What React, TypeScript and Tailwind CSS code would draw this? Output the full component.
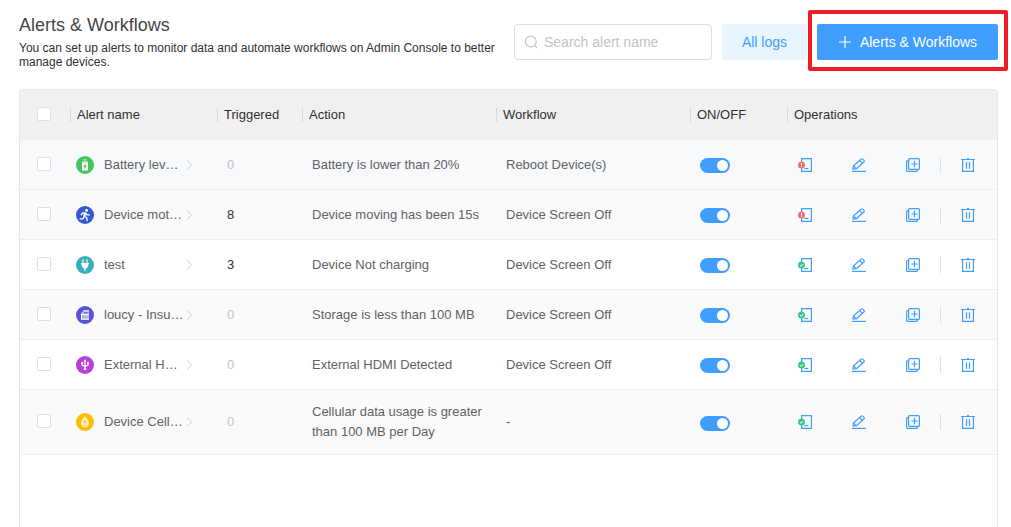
import React from "react";
import clsx from "clsx";

type AlertRow = {
  name: string;
  kind: "battery" | "motion" | "plug" | "storage" | "usb" | "data";
  triggered: number;
  action: string;
  workflow: string;
  failed?: boolean;
};

const alerts: AlertRow[] = [
  { name: "Battery lev…", kind: "battery", triggered: 0, action: "Battery is lower than 20%", workflow: "Reboot Device(s)", failed: true },
  { name: "Device mot…", kind: "motion", triggered: 8, action: "Device moving has been 15s", workflow: "Device Screen Off", failed: true },
  { name: "test", kind: "plug", triggered: 3, action: "Device Not charging", workflow: "Device Screen Off" },
  { name: "loucy - Insu…", kind: "storage", triggered: 0, action: "Storage is less than 100 MB", workflow: "Device Screen Off" },
  { name: "External H…", kind: "usb", triggered: 0, action: "External HDMI Detected", workflow: "Device Screen Off" },
  { name: "Device Cell…", kind: "data", triggered: 0, action: "Cellular data usage is greater than 100 MB per Day", workflow: "-" },
];

const columns = ["Alert name", "Triggered", "Action", "Workflow", "ON/OFF", "Operations"];

const kindColors = {
  battery: "#45c35c",
  motion: "#3259d0",
  plug: "#38b0b8",
  storage: "#5854d6",
  usb: "#b93edb",
  data: "#fcbd00",
};

const kindGlyphs = {
  battery: (
    <>
      <path d="M7.5 3.2h3v1.3h-3z" fill="#fff" opacity="0.7" />
      <path d="M6 5h6v2H6z" fill="#fff" opacity="0.5" />
      <rect x="6" y="6.5" width="6" height="8" rx="0.5" fill="#fff" />
      <path d="M9.8 7 7.200 10.700h1.500l-.4 2.800 2.500-3.900H9.300z" fill="#45c35c" />
    </>
  ),
  motion: (
    <>
      <circle cx="10.6" cy="4.4" r="1.4" fill="#fff" />
      <path
        d="M5.200 8.800 6.600 6.800l3 .2 1.500 1.800h2.300M9.400 7.200 8.200 10.200l2.500 1.500.5 2.900M8 10.600l-1 2.200H4"
        fill="none"
        stroke="#fff"
        strokeWidth="1.300"
        strokeLinecap="round"
        strokeLinejoin="round"
      />
      <path d="m8 6.800 2.300.4-1.100 4-2-1.200z" fill="#fff" />
    </>
  ),
  plug: (
    <>
      <path d="M7 3.300v4M11 3.300v4M9 12v3.200" stroke="#fff" strokeWidth="1.100" />
      <path d="M5 7h8v1.200h-.6c0 2.2-1 3.800-2.400 4.400H8c-1.400-.6-2.400-2.200-2.400-4.400H5z" fill="#fff" />
    </>
  ),
  storage: (
    <>
      <path d="M7.500 4.800h5.500V13.500H5V7.300z" fill="#fff" opacity="0.55" />
      <path d="M7.500 4.800H13M5 8.700h8M5.500 7.500v6M5 13.200h8" stroke="#fff" fill="none" />
      <path d="M8 6.300h3.500v1H8z" fill="#5854d6" />
    </>
  ),
  usb: (
    <>
      <path d="M9 4.500v8M6 7v2.200l3 1.400 3-1.400V7" fill="none" stroke="#fff" strokeWidth="1.300" />
      <path d="m9 3.300 1.500 2.200h-3z" fill="#fff" />
      <circle cx="9" cy="13" r="1.300" fill="#fff" />
      <path d="M5.200 6h1.800v2H5.200zM11 6h1.800v2H11z" fill="#fff" />
    </>
  ),
  data: (
    <>
      <path d="M9 3.300c2 2.600 3.900 4.700 3.900 7A3.900 3.900 0 0 1 5.100 10.300c0-2.300 1.900-4.400 3.900-7z" fill="#fff" opacity="0.8" />
      <path d="M9 6.300c1.200 1.500 2 2.400 2 3.400l-2 .8-2-.8c0-1 .8-1.900 2-3.400z" fill="#fcbd00" opacity="0.6" />
      <path d="M7 12c1.200.8 2.800.8 4 0" fill="none" stroke="#fcbd00" strokeWidth="0.700" />
    </>
  ),
};

const KindIcon = ({ kind }: { kind: AlertRow["kind"] }) => (
  <svg className="h-[18px] w-[18px] shrink-0" viewBox="0 0 18 18" aria-hidden="true">
    <circle cx="9" cy="9" r="9" fill={kindColors[kind]} />
    {kindGlyphs[kind]}
  </svg>
);

const LogIcon = ({ failed }: { failed?: boolean }) => (
  <svg className="h-3.5 w-3.5" viewBox="0 0 14 14" fill="none">
    <path d="M3.600.6h9.800v12.800H3.600z" stroke="#409eff" strokeWidth="1.200" />
    <path d="M6.300 10.500h4" stroke="#409eff" strokeWidth="1.200" />
    <circle cx="3.500" cy="7" r="3.500" fill={failed ? "#f56c6c" : "#2fc98a"} />
    {failed ? (
      <path d="M3.500 5v2.400M3.500 8.200v1" stroke="#fff" />
    ) : (
      <path d="M1.800 7 3.200 8.300 5.300 5.900" stroke="#fff" />
    )}
  </svg>
);

const EditIcon = () => (
  <svg className="h-3.5 w-3.5" viewBox="0 0 14 14" fill="none" stroke="#409eff" strokeWidth="1.200">
    <path d="M0 13.400h14" />
    <path d="M1 11.200 1.400 8 9 1.100q.8-.7 1.600 0l1.300 1.200q.8.9 0 1.700L4.400 10.700z" strokeLinejoin="round" />
    <path d="m7.700 2.500 2.800 2.800M1.600 8l2.700 2.600" />
  </svg>
);

const CopyIcon = () => (
  <svg className="h-3.5 w-3.5" viewBox="0 0 14 14" fill="none" stroke="#409eff" strokeWidth="1.200">
    <rect x="2.600" y="0.600" width="10.800" height="10.800" rx="1" />
    <path d="M2.500 2.600h-.9a1 1 0 0 0-1 1v8.800a1 1 0 0 0 1 1h8.800a1 1 0 0 0 1-1v-.9" />
    <path d="M8.500 2.800v6.400M5.300 6h6.400" />
  </svg>
);

const TrashIcon = () => (
  <svg className="h-3.5 w-3.5" viewBox="0 0 14 14" fill="none" stroke="#409eff" strokeWidth="1.200">
    <path d="M0 1.500h14M6 .5h2M1.600 1.500v11.900h10.800V1.500M5.500 4.300v6.400M8.500 4.300v6.400" />
  </svg>
);

const Checkbox = ({ label }: { label: string }) => (
  <input
    type="checkbox"
    aria-label={label}
    className="ml-[17px] block h-3.5 w-3.5 appearance-none rounded-xs border border-[#dcdfe6] bg-white checked:bg-[#409eff]"
  />
);

const Switch = ({ label }: { label: string }) => (
  <input
    type="checkbox"
    role="switch"
    defaultChecked
    aria-label={label}
    className="ml-2.5 block h-[15px] w-[30px] appearance-none rounded-full bg-[#dcdfe6] p-0.5 before:block before:h-[11px] before:w-[11px] before:rounded-full before:bg-white checked:bg-[#409eff] checked:before:ml-[15px]"
  />
);

const App = () => {
  return (
    <main className="flex min-h-screen flex-col bg-white pt-[15px] pr-[13px] pl-[19px] font-['Liberation_Sans',Arial,sans-serif] text-[13px] leading-5 text-[#606266]">
      {/* Title and toolbar */}
      <header className="mb-5 flex items-center gap-2.5">
        <div className="min-w-0 flex-1">
          <h1 className="text-lg leading-5 text-[#454545]">Alerts &amp; Workflows</h1>
          <p className="mt-1.5 text-xs leading-3.5 text-[#303133]">
            You can set up alerts to monitor data and automate workflows on Admin Console to better manage devices.
          </p>
        </div>
        <label className="flex h-9 w-[198px] shrink-0 items-center gap-1.5 rounded-sm border border-[#dcdfe6] px-[9px]">
          <svg className="h-3.5 w-3.5 shrink-0" viewBox="0 0 14 14" fill="none" stroke="#c0c4cc" strokeWidth="1.200" strokeLinecap="round">
            <circle cx="6.800" cy="6.500" r="5.400" />
            <path d="m10.700 10.700 1.800 1.800" />
          </svg>
          <input
            type="text"
            aria-label="Search alert name"
            placeholder="Search alert name"
            className="min-w-0 flex-1 text-sm outline-none placeholder:text-[#c0c4cc]"
          />
        </label>
        <button className="h-9 w-[85px] shrink-0 rounded-xs bg-[#e8f5ff] text-sm text-[#409eff]">All logs</button>
        <div className="relative shrink-0">
          <button className="flex h-9 w-[181px] items-center justify-center gap-2 rounded-xs bg-[#409eff] text-sm text-white">
            <svg className="h-3.5 w-3.5" viewBox="0 0 14 14" stroke="#fff" strokeWidth="1.200">
              <path d="M1 7h12M7 1v12" />
            </svg>
            Alerts &amp; Workflows
          </button>
          {/* Highlight frame */}
          <div className="pointer-events-none absolute -top-3.5 -right-2.5 -bottom-[11px] -left-[9px] rounded-xs border-4 border-[#ee1c25]"></div>
        </div>
      </header>

      <section className="flex-1 rounded-t-sm border border-b-0 border-[#e6e6e6]">
        <table className="w-full table-fixed border-separate border-spacing-0">
          <colgroup>
            <col className="w-[50px]" />
            <col className="w-[147px]" />
            <col className="w-[85px]" />
            <col />
            <col />
            <col className="w-[97px]" />
            <col className="w-[210px]" />
          </colgroup>
          <thead>
            <tr className="h-[50px] bg-[#f0f0f0] text-left text-[#303133]">
              <th className="border-b border-[#ebeef5] p-0 pb-0.5">
                <Checkbox label="Select all" />
              </th>
              {columns.map((column) => (
                <th key={column} className="border-b border-[#ebeef5] p-0 font-normal">
                  <div className="flex items-center gap-1.5">
                    <span className="h-3.5 w-px bg-[#d5d9d9]"></span>
                    {column}
                  </div>
                </th>
              ))}
            </tr>
          </thead>
          <tbody>
            {alerts.map((alert, idx) => (
              <tr
                key={alert.name}
                className={clsx(
                  "h-[50px] *:border-b *:border-[#ebeef5]",
                  idx === 0 ? "bg-[#f7f9fb]" : idx % 2 ? "bg-[#fafafa]" : "bg-white"
                )}
              >
                <td className="p-0 pb-0.5">
                  <Checkbox label={`Select ${alert.name}`} />
                </td>
                <td className="p-0">
                  <div className="flex items-center pl-1.5">
                    <KindIcon kind={alert.kind} />
                    <span className="ml-2.5 w-20 whitespace-nowrap">{alert.name}</span>
                    <svg className="h-2.5 w-3" viewBox="0 0 12 10" fill="none" stroke="#c8ccd3">
                      <path d="m3 .5 4.700 4.500L3 9.500" />
                    </svg>
                  </div>
                </td>
                <td className={clsx("p-0 pl-2.5", alert.triggered ? "text-[#303133]" : "text-[#c0c4cc]")}>
                  {alert.triggered}
                </td>
                <td className="px-2.5 py-3">{alert.action}</td>
                <td className="px-2.5 py-3">{alert.workflow}</td>
                <td className="p-0 pt-0.5">
                  <Switch label={`Enable ${alert.name}`} />
                </td>
                <td className="p-0">
                  <div className="flex items-center gap-5 pl-[11px]">
                    <div className="flex gap-10">
                      <button aria-label="Logs">
                        <LogIcon failed={alert.failed} />
                      </button>
                      <button aria-label="Edit">
                        <EditIcon />
                      </button>
                      <button aria-label="Duplicate">
                        <CopyIcon />
                      </button>
                    </div>
                    <span className="h-4 w-px bg-[#dcdfe6]"></span>
                    <button aria-label="Delete">
                      <TrashIcon />
                    </button>
                  </div>
                </td>
              </tr>
            ))}
          </tbody>
        </table>
      </section>
    </main>
  );
};

export default App;
